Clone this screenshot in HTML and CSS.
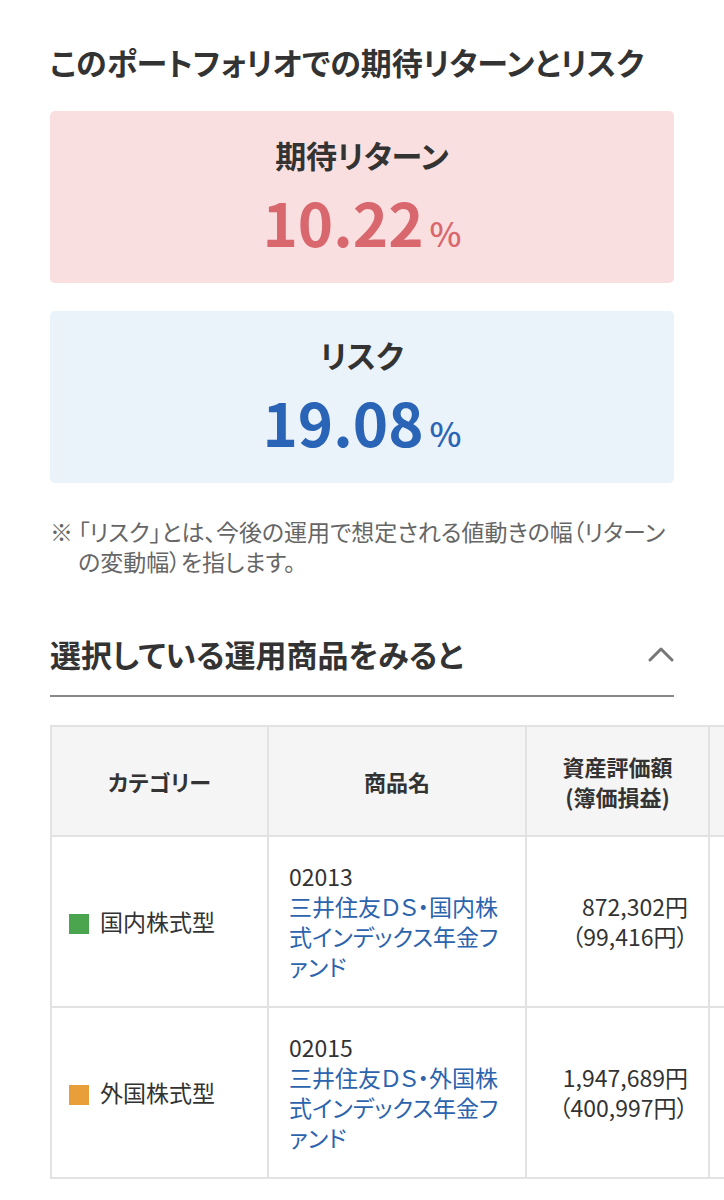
FILE: index.html
```html
<!DOCTYPE html>
<html lang="ja">
<head>
  <meta charset="UTF-8" />
  <meta name="viewport" content="width=device-width, initial-scale=1.0"/>
  <title>期待リターンとリスク</title>
  <link rel="stylesheet" href="styles.css">
</head>
<body>
  <div class="page">
    <h1 class="title">このポートフォリオでの期待リターンとリスク</h1>

    <div class="card card-return">
      <div class="card-label">期待リターン</div>
      <div class="card-value">10.22<span class="unit">%</span></div>
    </div>

    <div class="card card-risk">
      <div class="card-label">リスク</div>
      <div class="card-value">19.08<span class="unit">%</span></div>
    </div>

    <p class="note"><span class="mark">※</span>「リスク」とは、今後の運用で想定される値動きの幅（リターンの変動幅）を指します。</p>

    <!-- 運用商品 -->
    <div class="section-head">
      <h2>選択している運用商品をみると</h2>
      <svg class="chevron" width="26" height="16" viewBox="0 0 26 16">
        <polyline points="2,14 13,3 24,14" fill="none" stroke="#777" stroke-width="3" stroke-linecap="round" stroke-linejoin="round"/>
      </svg>
    </div>

    <div class="table-scroll">
      <table class="fund-table">
        <thead>
          <tr>
            <th class="col-cat">カテゴリー</th>
            <th class="col-name">商品名</th>
            <th class="col-amount">資産評価額<br>(簿価損益)</th>
            <th class="col-ratio"></th>
          </tr>
        </thead>
        <tbody>
          <tr>
            <td class="cat"><span class="swatch swatch-jp"></span>国内株式型</td>
            <td class="name">02013<br><a href="#">三井住友ＤＳ・国内株式インデックス年金ファンド</a></td>
            <td class="amount">872,302円<br>（99,416円）</td>
            <td class="ratio"></td>
          </tr>
          <tr>
            <td class="cat"><span class="swatch swatch-fx"></span>外国株式型</td>
            <td class="name">02015<br><a href="#">三井住友ＤＳ・外国株式インデックス年金ファンド</a></td>
            <td class="amount">1,947,689円<br>（400,997円）</td>
            <td class="ratio"></td>
          </tr>
        </tbody>
      </table>
    </div>
  </div>
</body>
</html>
```

FILE: styles.css
```css
* {
  box-sizing: border-box;
}
body {
  margin: 0;
  background: #fff;
  color: #333;
  font-family: "Noto Sans CJK JP", "Noto Sans", sans-serif;
  font-feature-settings: "palt";
  overflow: hidden;
}
.page {
  padding: 42px 50px 40px;
}
.title {
  margin: 0 0 29px;
  font-size: 31px;
  line-height: 40px;
  font-weight: bold;
  color: #333;
}
.card {
  border-radius: 5px;
  padding: 24px 0 18px;
  text-align: center;
  margin-bottom: 28px;
}
.card-return {
  background: #fadfe1;
}
.card-risk {
  background: #eaf2fa;
}
.card-label {
  font-size: 31px;
  line-height: 40px;
  font-weight: bold;
  color: #333;
}
.card-value {
  margin-top: 14px;
  font-size: 60px;
  line-height: 64px;
  font-weight: bold;
}
.card-return .card-value {
  color: #d9676e;
}
.card-risk .card-value {
  color: #2a64b6;
}
.unit {
  font-size: 34px;
  font-weight: 500;
  margin-left: 6px;
}
.note {
  margin: 33px 0 0;
  padding-left: 28px;
  text-indent: -28px;
  font-size: 23px;
  line-height: 30px;
  color: #666;
}
.note .mark {
  display: inline-block;
  width: 28px;
  text-indent: 0;
}
.section-head {
  display: flex;
  justify-content: space-between;
  align-items: center;
  margin-top: 58px;
  padding-bottom: 21px;
  border-bottom: 2px solid #888;
}
.section-head h2 {
  margin: 0;
  font-size: 31px;
  line-height: 40px;
  font-weight: bold;
  color: #333;
}
.table-scroll {
  margin-top: 28px;
  margin-right: -50px;
  overflow: hidden;
}
.fund-table {
  border-collapse: collapse;
  table-layout: fixed;
  width: 808px;
}
.fund-table th,
.fund-table td {
  border: 2px solid #e2e2e2;
  vertical-align: middle;
}
.fund-table th {
  background: #f5f5f5;
  padding: 24px 10px;
  font-size: 22px;
  line-height: 30px;
  font-weight: bold;
  color: #333;
  text-align: center;
}
.col-cat { width: 217px; }
.col-name { width: 258px; }
.col-amount { width: 183px; }
.col-ratio { width: 150px; }
.fund-table td {
  padding: 24px 20px 25px;
  font-size: 23px;
  line-height: 30px;
  color: #333;
}
.fund-table td.cat {
  padding-left: 17px;
}
.fund-table td a {
  color: #2c63ad;
  text-decoration: none;
}
.fund-table td.amount {
  text-align: right;
  padding-right: 20px;
}
.swatch {
  display: inline-block;
  width: 20px;
  height: 20px;
  margin-right: 11px;
  vertical-align: -3px;
}
.swatch-jp {
  background: #4aa64e;
}
.swatch-fx {
  background: #e89f3a;
}
```
